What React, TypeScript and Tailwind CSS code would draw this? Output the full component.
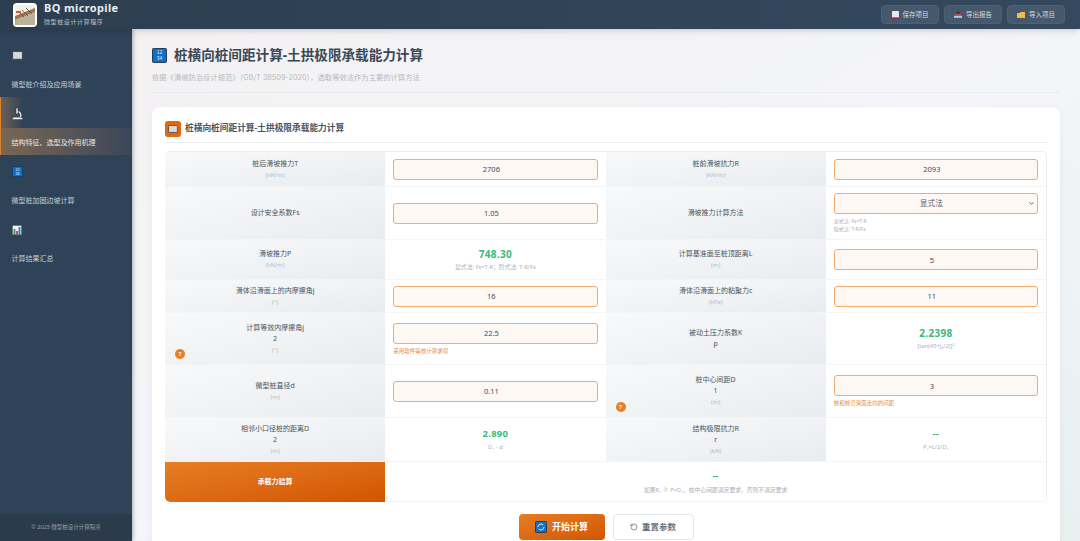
import React from "react";
import { ChevronDown, RotateCcw } from "lucide-react";

const FONT = "font-['Noto_Sans','Noto_Sans_CJK_SC',sans-serif]";

function Logo() {
    return (
        <div className="w-[24px] h-[24px] rounded-[4px] bg-white p-[2px] shadow-sm">
            <svg viewBox="0 0 20 20" className="w-full h-full">
                <rect width="20" height="20" fill="#d9d2bd" />
                <path d="M0 0h20v5L0 11z" fill="#f2f0ea" />
                <path d="M0 11L20 3v4L0 15z" fill="#a0744e" />
                <path d="M0 15L20 7v13H0z" fill="#b9b39b" />
                <path d="M3 6l6 6M7 5l6 6M11 3l6 6" stroke="#5c4a3a" strokeWidth="0.8" />
                <rect x="1" y="6" width="5" height="2" fill="#c2622d" />
            </svg>
        </div>
    );
}

function BookIcon({ size = 11 }: { size?: number }) {
    return (
        <svg width={size} height={size * 0.8} viewBox="0 0 12 10">
            <rect x="0.5" y="0.5" width="11" height="9" rx="1" fill="#c9ccd0" stroke="#3c4650" />
            <rect x="1.5" y="1.5" width="9" height="6.5" fill="#d8dade" />
        </svg>
    );
}

function MicroscopeIcon() {
    return (
        <svg width="11" height="13" viewBox="0 0 11 13">
            <path d="M4 1h2v6H4z" fill="#f4f4f4" stroke="#222" strokeWidth="0.5" />
            <path d="M6.5 4.5C9 5.5 9.5 9 8 10.5H1.5" fill="none" stroke="#f4f4f4" strokeWidth="1.2" />
            <rect x="0.5" y="10.5" width="10" height="2" fill="#f4f4f4" stroke="#222" strokeWidth="0.4" />
        </svg>
    );
}

function DigitsIcon({ size = 11 }: { size?: number }) {
    return (
        <svg width={size} height={size} viewBox="0 0 14 14">
            <rect x="0.4" y="0.4" width="13.2" height="13.2" rx="1" fill="#0f6fc6" stroke="#12233a" strokeWidth="0.8" />
            <text x="7" y="6" textAnchor="middle" fontSize="4.6" fill="#e6f0fa" fontFamily="Liberation Sans">12</text>
            <text x="7" y="11.5" textAnchor="middle" fontSize="4.6" fill="#e6f0fa" fontFamily="Liberation Sans">34</text>
        </svg>
    );
}

function ChartIcon() {
    return (
        <svg width="10" height="10" viewBox="0 0 10 10">
            <rect x="0.3" y="0.3" width="9.4" height="9.4" fill="#eef1f2" stroke="#333b44" strokeWidth="0.5" />
            <rect x="1.5" y="4" width="2" height="5" fill="#3aa655" />
            <rect x="4" y="6" width="2" height="3" fill="#d9483b" />
            <rect x="6.5" y="2" width="2" height="7" fill="#3a7fd1" />
        </svg>
    );
}

function SaveIcon() {
    return (
        <svg width="7" height="8" viewBox="0 0 7 8">
            <rect width="7" height="8" rx="0.6" fill="#e8e6ea" />
            <rect y="6.4" width="7" height="1.6" fill="#8a2748" />
        </svg>
    );
}

function ExportIcon() {
    return (
        <svg width="8" height="7" viewBox="0 0 8 7">
            <path d="M4 0l2 2.5H2z" fill="#2b2f36" />
            <rect x="1" y="3" width="6" height="1.6" fill="#c9473e" />
            <rect y="4.8" width="8" height="2" fill="#a8d0ea" />
        </svg>
    );
}

function FolderIcon() {
    return (
        <svg width="8" height="6" viewBox="0 0 8 6">
            <path d="M0 1h3l.6-1H8v6H0z" fill="#f0bd4a" />
        </svg>
    );
}

function RefreshTile() {
    return (
        <svg width="12" height="12" viewBox="0 0 12 12">
            <rect x="0.4" y="0.4" width="11.2" height="11.2" rx="1" fill="#1273cc" stroke="#16283c" strokeWidth="0.8" />
            <path d="M3 6a3 3 0 0 1 5.2-2M9 6a3 3 0 0 1-5.2 2" fill="none" stroke="#fff" strokeWidth="0.9" />
        </svg>
    );
}

function Field({ value, note }: { value: string; note?: string }) {
    return (
        <div className="w-full">
            <input
                readOnly
                type="number"
                value={value}
                className="block w-full h-[21px] pl-[7px] rounded-[3px] border-[1.5px] border-[#f4ab6c] bg-[#fdf8f4] text-center text-[7.5px] text-[#444b52] outline-none"
            />
            {note && <p className="mt-[3px] text-[5.5px] leading-[8px] text-[#e98a3c]">{note}</p>}
        </div>
    );
}

function Label({ lines, badge }: { lines: string[]; badge?: boolean }) {
    return (
        <div className="relative flex flex-col items-center justify-center h-full gap-[3px] bg-gradient-to-br from-[#f8f9fa] to-[#e9ecef] border-b border-[#f3f4f6]">
            {lines.map((line, i) => (
                <span
                    key={i}
                    className={
                        line.startsWith("(")
                            ? "text-[6px] leading-[8px] text-[#b4bcc3]"
                            : "text-[7px] leading-[8px] text-[#49545e]"
                    }
                >
                    {line}
                </span>
            ))}
            {badge && (
                <span className="absolute left-[10px] bottom-[5px] w-[10px] h-[10px] rounded-full bg-[#e67e22] text-white text-[6px] leading-[10px] text-center font-bold">
                    ?
                </span>
            )}
        </div>
    );
}

function Value({ children }: { children: React.ReactNode }) {
    return (
        <div className="flex flex-col items-center justify-center h-full px-[8px] bg-white border-b border-[#f3f4f6]">
            {children}
        </div>
    );
}

function Result({ value, formula, big = false }: { value: string; formula: string; big?: boolean }) {
    return (
        <>
            <span className={(big ? "text-[10px]" : "text-[9.5px]") + " font-bold leading-[12px] tracking-[0.3px] text-[#3cb878]"}>
                {value}
            </span>
            <span className="mt-[3px] text-[5.8px] leading-[8px] text-[#a9b1b8]">{formula}</span>
        </>
    );
}

const navItems = [
    { icon: <BookIcon />, label: "微型桩介绍及应用场景" },
    { icon: <MicroscopeIcon />, label: "结构特征、选型及作用机理", active: true },
    { icon: <DigitsIcon />, label: "微型桩加固边坡计算" },
    { icon: <ChartIcon />, label: "计算结果汇总" },
];

const headerButtons = [
    { icon: <SaveIcon />, label: "保存项目" },
    { icon: <ExportIcon />, label: "导出报告" },
    { icon: <FolderIcon />, label: "导入项目" },
];

export default function App() {
    return (
        <div className={FONT + " w-[1080px] h-[541px] overflow-hidden flex flex-col"}>
            <header className="h-[29px] shrink-0 flex items-center justify-between pl-[13px] pr-[15px] bg-gradient-to-r from-[#2c3e50] to-[#34495e] shadow-md z-10">
                <div className="flex items-center gap-[7px]">
                    <Logo />
                    <div className="flex flex-col">
                        <span className="text-[11px] leading-[12px] font-bold tracking-[0.35px] text-[#e8ecef]">BQ micropile</span>
                        <span className="mt-[4px] text-[6px] leading-[9px] tracking-[0.6px] text-[#b9c2ca]">微型桩设计计算程序</span>
                    </div>
                </div>
                <div className="flex items-center gap-[5px]">
                    {headerButtons.map((b) => (
                        <button
                            key={b.label}
                            className="w-[58px] h-[19px] flex items-center justify-center gap-[4px] rounded-[4px] bg-[#46586b] border border-[#4e6073] text-[6.5px] text-[#d5dbe0]"
                        >
                            {b.icon}
                            {b.label}
                        </button>
                    ))}
                </div>
            </header>

            <div className="flex-1 flex min-h-0">
                <aside className="w-[132px] shrink-0 flex flex-col bg-[#2f4358] shadow-[1px_0_4px_rgba(0,0,0,0.3)] z-[5]">
                    <nav className="flex-1 pt-[10px]">
                        {navItems.map((item) => (
                            <div
                                key={item.label}
                                className={
                                    "h-[58px] flex flex-col border-l-[1.5px] " +
                                    (item.active ? "border-[#d9822b]" : "border-transparent")
                                }
                            >
                                <div className="h-[31px] relative flex items-center pt-[2px] pl-[11px]">
                                    {item.active && (
                                        <div className="absolute inset-y-0 left-0 w-[22px] bg-gradient-to-r from-[#6f6054] to-transparent" />
                                    )}
                                    <span className="relative flex">{item.icon}</span>
                                </div>
                                <div
                                    className={
                                        "h-[27px] flex items-center pt-[3px] pl-[10.5px] text-[7px] " +
                                        (item.active
                                            ? "bg-gradient-to-r from-[#7a6652] to-[#3a4659] text-[#e8e6e2]"
                                            : "text-[#c5ced6]")
                                    }
                                >
                                    {item.label}
                                </div>
                            </div>
                        ))}
                    </nav>
                    <div className="h-[27px] flex items-center justify-center bg-[#2c3b4c] text-[5.5px] text-[#97a3ae]">
                        © 2025 微型桩设计计算程序
                    </div>
                </aside>

                <main className="flex-1 min-w-0 overflow-hidden px-[20px] pt-[14px] bg-gradient-to-br from-[#f3f1f2] via-[#f4f5f9] to-[#e8f0f0]">
                    <div className="flex items-center gap-[7px] h-[24px]">
                        <DigitsIcon size={15} />
                        <h1 className="text-[13.6px] leading-[24px] font-bold text-[#3a4856]">桩横向桩间距计算-土拱极限承载能力计算</h1>
                    </div>
                    <p className="mt-[5px] font-['Inter','Noto_Sans_CJK_SC',sans-serif] text-[7.3px] leading-[11px] text-[#b3bbc2]">
                        依据《滑坡防治设计规范》（GB/T 38509-2020），选取等效法作为主要的计算方法
                    </p>
                    <div className="mt-[9px] h-px bg-[#e8eaee]" />

                    <section className="mt-[14px] rounded-[8px] bg-white px-[13px] pt-[13px] pb-[20px] shadow-[0_2px_8px_rgba(0,0,0,0.05)]">
                        <div className="flex items-center gap-[4px] h-[17px]">
                            <span className="w-[16px] h-[16px] flex items-center justify-center rounded-[3px] bg-[#e0680f]">
                                <BookIcon size={10} />
                            </span>
                            <h2 className="text-[8.7px] font-semibold text-[#4a5560]">桩横向桩间距计算-土拱极限承载能力计算</h2>
                        </div>
                        <div className="mt-[5px] h-px bg-[#eceef2]" />

                        <div className="mt-[8px] grid grid-cols-4 grid-rows-[35px_53px_40px_33px_52px_53px_44px_40px] rounded-[5px] overflow-hidden border-t border-r border-[#eceef3]">
                            <Label lines={["桩后滑坡推力T", "(kN/m)"]} />
                            <Value><Field value="2706" /></Value>
                            <Label lines={["桩前滑坡抗力R", "(kN/m)"]} />
                            <Value><Field value="2093" /></Value>

                            <Label lines={["设计安全系数Fs"]} />
                            <Value><Field value="1.05" /></Value>
                            <Label lines={["滑坡推力计算方法"]} />
                            <Value>
                                <div className="w-full">
                                    <div className="relative">
                                        <select
                                            defaultValue="显式法"
                                            className="block w-full h-[21px] pr-[9px] appearance-none rounded-[3px] border-[1.5px] border-[#f4ab6c] bg-[#fdf8f4] text-center text-[7.7px] text-[#555d65] outline-none"
                                        >
                                            <option>显式法</option>
                                            <option>隐式法</option>
                                        </select>
                                        <ChevronDown strokeWidth={3} className="absolute right-[3px] top-[7px] w-[7px] h-[7px] text-[#555d65]" />
                                    </div>
                                    <p className="mt-[3px] text-[5px] leading-[8px] text-[#a9b1b8]">
                                        显式法: Fs×T-R
                                        <br />
                                        隐式法: T-R/Fs
                                    </p>
                                </div>
                            </Value>

                            <Label lines={["滑坡推力P", "(kN/m)"]} />
                            <Value><Result big value="748.30" formula="显式法: Fs×T-R；隐式法: T-R/Fs" /></Value>
                            <Label lines={["计算基准面至桩顶距离L", "(m)"]} />
                            <Value><Field value="5" /></Value>

                            <Label lines={["滑体沿滑面上的内摩擦角j", "(°)"]} />
                            <Value><Field value="16" /></Value>
                            <Label lines={["滑体沿滑面上的粘聚力c", "(kPa)"]} />
                            <Value><Field value="11" /></Value>

                            <Label badge lines={["计算等效内摩擦角j", "2", "(°)"]} />
                            <Value><Field value="22.5" note="采用软件等效计算求得" /></Value>
                            <Label lines={["被动土压力系数K", "p"]} />
                            <Value><Result big value="2.2398" formula="[tan(45+j₂/2)]²" /></Value>

                            <Label lines={["微型桩直径d", "(m)"]} />
                            <Value><Field value="0.11" /></Value>
                            <Label badge lines={["桩中心间距D", "1", "(m)"]} />
                            <Value><Field value="3" note="桩和桩沿滑面走向的间距" /></Value>

                            <Label lines={["相邻小口径桩的距离D", "2", "(m)"]} />
                            <Value><Result value="2.890" formula="D₁ - d" /></Value>
                            <Label lines={["结构极限抗力R", "r", "(kN)"]} />
                            <Value><Result value="--" formula="P₁×L/2/D₁" /></Value>

                            <div className="flex items-center justify-center rounded-bl-[5px] bg-gradient-to-br from-[#e67e22] to-[#d35400] text-[7px] font-bold text-white">
                                承载力验算
                            </div>
                            <div className="col-span-3 flex flex-col items-center justify-center bg-white border-b border-[#f3f4f6]">
                                <span className="text-[9px] font-bold leading-[12px] tracking-[0.3px] text-[#3cb878]">--</span>
                                <span className="mt-[4px] text-[5.8px] leading-[8px] text-[#a9b1b8]">
                                    如果R₁ ≥ P×D₁，桩中心间距满足要求，否则不满足要求
                                </span>
                            </div>
                        </div>

                        <div className="mt-[12px] flex justify-center gap-[8px]">
                            <button className="w-[86px] h-[26px] flex items-center justify-center gap-[5px] rounded-[4px] bg-gradient-to-br from-[#e67e22] to-[#d35400] text-[9px] font-bold text-white">
                                <RefreshTile />
                                开始计算
                            </button>
                            <button className="w-[81px] h-[26px] flex items-center justify-center gap-[4px] rounded-[4px] bg-white border border-[#e4e7eb] text-[8.5px] font-medium text-[#55606b]">
                                <RotateCcw className="w-[8px] h-[8px]" />
                                重置参数
                            </button>
                        </div>
                    </section>
                </main>
            </div>
        </div>
    );
}
